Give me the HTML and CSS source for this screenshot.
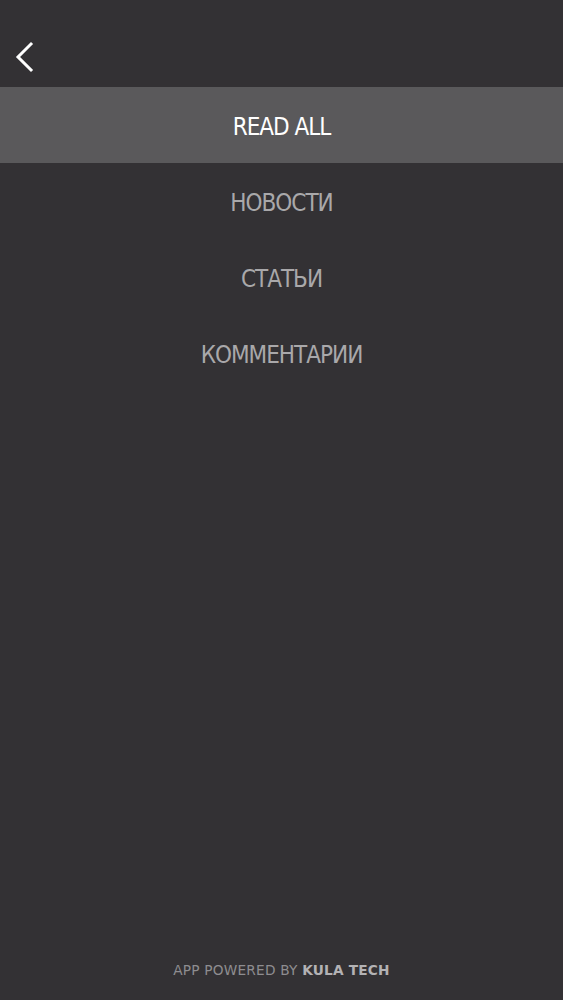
FILE: index.html
```html
<!DOCTYPE html>
<html lang="ru">
<head>
<meta charset="utf-8">
<link rel="stylesheet" href="styles.css">
</head>
<body>
<div class="app">
  <header class="topbar">
    <button class="back" aria-label="Back">
      <svg width="22" height="32" viewBox="0 0 22 32"><path d="M18 3 L5 16 L18 29" fill="none" stroke="#fff" stroke-width="3" stroke-linecap="square"/></svg>
    </button>
  </header>
  <nav class="menu">
    <a class="item active">READ ALL</a>
    <a class="item">НОВОСТИ</a>
    <a class="item">СТАТЬИ</a>
    <a class="item">КОММЕНТАРИИ</a>
  </nav>
  <footer class="footer">APP POWERED BY <b>KULA TECH</b></footer>
</div>
</body>
</html>
```

FILE: styles.css
```css
html, body { margin: 0; padding: 0; background: #333134; }
.app {
  width: 563px; height: 1000px;
  display: flex; flex-direction: column;
  font-family: "DejaVu Sans Condensed", "DejaVu Sans", sans-serif;
}
.topbar { height: 87px; box-sizing: border-box; padding-top: 41px; display: flex; align-items: flex-start; }
.back { background: none; border: 0; padding: 0 0 0 13px; display: flex; cursor: pointer; }
.menu { display: flex; flex-direction: column; }
.item {
  height: 76px; box-sizing: border-box; padding-top: 3px;
  display: flex; align-items: center; justify-content: center;
  font-size: 24px; color: #a9a8aa; letter-spacing: -1px;
}
.item.active { background: #5a595b; color: #fff; }
.footer {
  margin-top: auto; height: 38px; line-height: 16px; text-align: center;
  font-family: "DejaVu Sans", sans-serif; font-size: 13.7px; color: #8e8d90;
  letter-spacing: 0.2px;
}
.footer b { color: #b3b2b4; font-weight: bold; }
```
